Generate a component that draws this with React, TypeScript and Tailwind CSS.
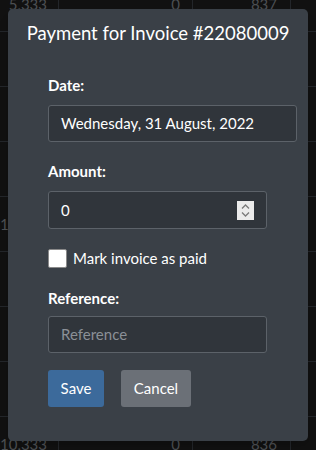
export default function App() {
  const rows = [
    ["5,333", "0", "837"],
    ["1,333", "", ""],
    ["1,333", "", ""],
    ["1,333", "", ""],
    ["10,333", "", ""],
    ["1,333", "", ""],
    ["1,333", "", ""],
    ["1,333", "", ""],
    ["10,333", "0", "836"],
  ]

  return (
    <div
      className="relative h-[450px] w-[316px] overflow-hidden bg-[#111111]"
      style={{ fontFamily: "Lato, 'Noto Sans', sans-serif" }}
    >
      {/* background table */}
      <div className="mt-[-23px]">
        {rows.map((r, i) => (
          <div key={i} className="flex h-[55px] items-center border-b border-[#23262a] text-[15px] text-[#4c4f53]">
            <div className="w-[58px] pr-[11px] text-right">{r[0]}</div>
            <div className="flex h-[40px] w-[134px] items-center justify-end border-l border-[#23262a] pr-[12px]">{r[1]}</div>
            <div className="flex h-[40px] w-[98px] items-center justify-end border-l border-[#23262a] pr-[13px]">{r[2]}</div>
            <div className="h-[40px] flex-1 border-l border-[#23262a]" />
          </div>
        ))}
      </div>

      {/* modal */}
      <div className="absolute left-[8px] top-[9px] flex h-[432px] w-[300px] flex-col rounded-[5px] bg-[#3a4047] px-[40px] shadow-lg">
        <h2 className="-mx-[40px] mt-[12px] whitespace-nowrap text-center text-[18.5px] leading-[24px] text-white">
          Payment for Invoice #22080009
        </h2>

        <label className="mt-[30px] text-[15px] font-bold leading-[20px] text-white">Date:</label>
        <div className="mt-[10px] flex h-[37px] w-[249px] items-center rounded-[3px] border border-[#5c6269] bg-[#30353b] px-[12px] text-[15px] text-white">
          Wednesday, 31 August, 2022
        </div>

        <label className="mt-[19px] text-[15px] font-bold leading-[20px] text-white">Amount:</label>
        <div className="mt-[10px] flex h-[38px] w-[219px] items-center justify-between rounded-[3px] border border-[#5c6269] bg-[#30353b] pl-[12px] pr-[12px] text-[15px] text-white">
          <span>0</span>
          <div className="flex h-[19px] w-[17px] items-center justify-center bg-[#ebebeb]">
            <svg width="11" height="15" viewBox="0 0 11 15" fill="none" stroke="#7a7a7a" strokeWidth="1.3">
              <path d="M2 5.5 L5.5 2 L9 5.5" />
              <path d="M2 9.5 L5.5 13 L9 9.5" />
            </svg>
          </div>
        </div>

        <div className="mt-[20px] flex h-[19px] items-center gap-[6px]">
          <div className="h-[19px] w-[19px] rounded-[2px] border border-[#8a8a8a] bg-white" />
          <span className="text-[15px] text-white">Mark invoice as paid</span>
        </div>

        <label className="mt-[20px] text-[15px] font-bold leading-[20px] text-white">Reference:</label>
        <div className="mt-[8px] flex h-[37px] w-[219px] items-center rounded-[3px] border border-[#5c6269] bg-[#30353b] px-[12px] text-[15px] text-[#8b9097]">
          Reference
        </div>

        <div className="mt-[17px] flex gap-[17px]">
          <button className="h-[37px] w-[56px] rounded-[3px] bg-[#3c6a9b] text-[15px] text-white">Save</button>
          <button className="h-[37px] w-[70px] rounded-[3px] bg-[#6b7077] text-[15px] text-white">Cancel</button>
        </div>
      </div>
    </div>
  )
}
